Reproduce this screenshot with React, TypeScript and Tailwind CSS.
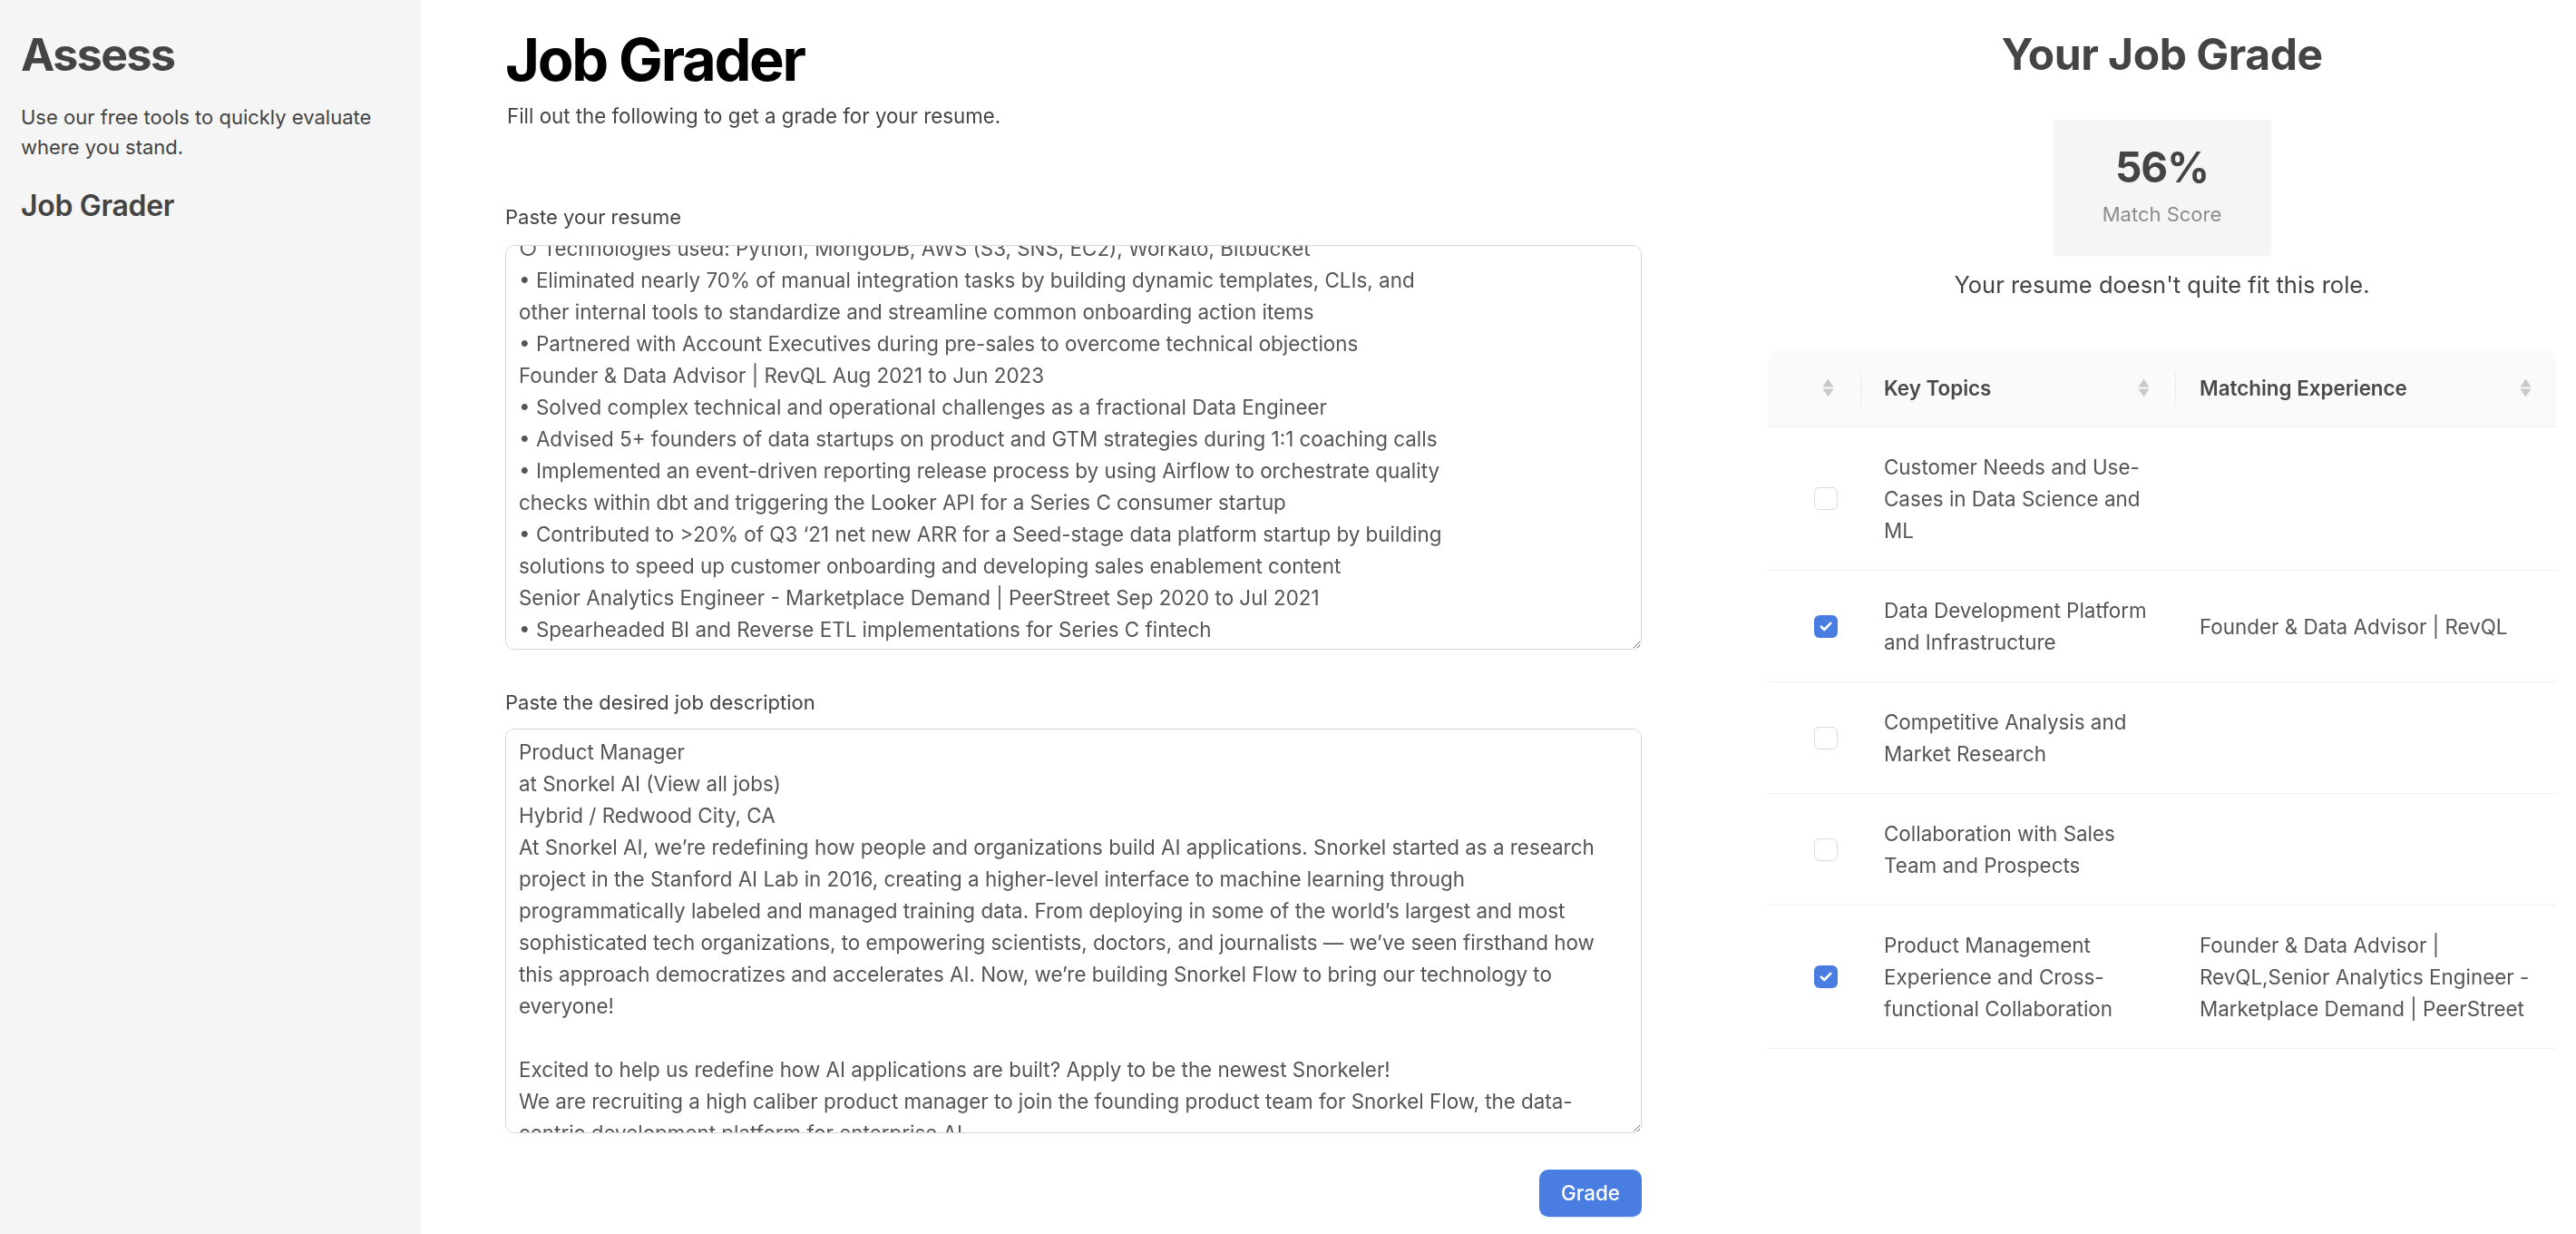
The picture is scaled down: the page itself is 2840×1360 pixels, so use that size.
import { useEffect, useRef } from 'react'

const resumeText = [
  'Solutions Engineer | Workato Jul 2023 to Present',
  '• Designed and shipped integration recipes for enterprise customer onboarding',
  '• Built internal automation to sync CRM, billing and support data across teams',
  '○ Technologies used: Python, MongoDB, AWS (S3, SNS, EC2), Workato, Bitbucket',
  '• Eliminated nearly 70% of manual integration tasks by building dynamic templates, CLIs, and',
  'other internal tools to standardize and streamline common onboarding action items',
  '• Partnered with Account Executives during pre-sales to overcome technical objections',
  'Founder & Data Advisor | RevQL Aug 2021 to Jun 2023',
  '• Solved complex technical and operational challenges as a fractional Data Engineer',
  '• Advised 5+ founders of data startups on product and GTM strategies during 1:1 coaching calls',
  '• Implemented an event-driven reporting release process by using Airflow to orchestrate quality',
  'checks within dbt and triggering the Looker API for a Series C consumer startup',
  '• Contributed to >20% of Q3 ‘21 net new ARR for a Seed-stage data platform startup by building',
  'solutions to speed up customer onboarding and developing sales enablement content',
  'Senior Analytics Engineer - Marketplace Demand | PeerStreet Sep 2020 to Jul 2021',
  '• Spearheaded BI and Reverse ETL implementations for Series C fintech',
  '• Modeled marketplace demand data in dbt and Snowflake for investor reporting',
  '• Partnered with Product to define KPIs and self-serve dashboards in Looker',
  'Education',
].join('\n')

const jobText = [
  'Product Manager',
  'at Snorkel AI (View all jobs)',
  'Hybrid / Redwood City, CA',
  'At Snorkel AI, we’re redefining how people and organizations build AI applications. Snorkel started as a research',
  'project in the Stanford AI Lab in 2016, creating a higher-level interface to machine learning through',
  'programmatically labeled and managed training data. From deploying in some of the world’s largest and most',
  'sophisticated tech organizations, to empowering scientists, doctors, and journalists — we’ve seen firsthand how',
  'this approach democratizes and accelerates AI. Now, we’re building Snorkel Flow to bring our technology to',
  'everyone!',
  '',
  'Excited to help us redefine how AI applications are built? Apply to be the newest Snorkeler!',
  'We are recruiting a high caliber product manager to join the founding product team for Snorkel Flow, the data-',
  'centric development platform for enterprise AI.',
].join('\n')

const rows = [
  { checked: false, topic: ['Customer Needs and Use-', 'Cases in Data Science and', 'ML'], match: [] as string[] },
  { checked: true, topic: ['Data Development Platform', 'and Infrastructure'], match: ['Founder & Data Advisor | RevQL'] },
  { checked: false, topic: ['Competitive Analysis and', 'Market Research'], match: [] },
  { checked: false, topic: ['Collaboration with Sales', 'Team and Prospects'], match: [] },
  {
    checked: true,
    topic: ['Product Management', 'Experience and Cross-', 'functional Collaboration'],
    match: ['Founder & Data Advisor |', 'RevQL,Senior Analytics Engineer -', 'Marketplace Demand | PeerStreet'],
  },
]

function SortIcon() {
  return (
    <svg width="13" height="21" viewBox="0 0 13 21" className="shrink-0">
      <path d="M6.5 0.5L12.5 9.5H0.5z" fill="#c9c9c9" />
      <path d="M0.5 11.5h12l-6 9z" fill="#c9c9c9" />
    </svg>
  )
}

function Checkbox({ on }: { on: boolean }) {
  if (!on) {
    return <span className="block h-[25px] w-[26px] rounded-[6px] border-[1.5px] border-[#d9d9d9] bg-white" />
  }
  return (
    <span className="flex h-[25px] w-[26px] items-center justify-center rounded-[6px] bg-[#4a7de2]">
      <svg width="14" height="11" viewBox="0 0 14 11">
        <path d="M1.8 5.6L5.2 9L12.2 1.8" stroke="white" strokeWidth="2.6" fill="none" strokeLinecap="round" strokeLinejoin="round" />
      </svg>
    </span>
  )
}

function Lines({ lines }: { lines: string[] }) {
  return (
    <>
      {lines.map((l, i) => (
        <div key={i} className="whitespace-nowrap">
          {l}
        </div>
      ))}
    </>
  )
}

export default function App() {
  const resumeRef = useRef<HTMLTextAreaElement>(null)

  useEffect(() => {
    if (resumeRef.current) resumeRef.current.scrollTop = 127
  }, [])

  const areaCls =
    'block h-[446px] w-full resize-y rounded-[10px] border border-[#d6d6d6] bg-white px-[14px] py-[7px] text-[22.4px] leading-[35px] text-[#555] outline-none [scrollbar-width:none]'

  return (
    <div className="flex min-h-screen bg-white text-[#444] [font-family:Inter,sans-serif]">
      {/* Sidebar */}
      <aside className="w-[464px] shrink-0 bg-[#f5f5f5] px-[23px] pt-[35px]">
        <h2 className="text-[50px] font-bold leading-[50px] tracking-[-0.03em] text-[#444]">Assess</h2>
        <p className="mt-[28px] text-[22px] leading-[33px] text-[#444]">
          Use our free tools to quickly evaluate
          <br />
          where you stand.
        </p>
        <h3 className="mt-[28px] text-[32px] font-semibold leading-[40px] tracking-[-0.01em] text-[#444]">Job Grader</h3>
      </aside>

      {/* Form */}
      <section className="ml-[93px] w-[1253px] shrink-0 pt-[33px]">
        <h1 className="text-[65px] font-bold leading-[65px] tracking-[-0.035em] text-black">Job Grader</h1>
        <p className="mt-[13px] pl-[2px] text-[22.3px] leading-[33px] text-[#444]">
          Fill out the following to get a grade for your resume.
        </p>

        <label className="mt-[79px] block text-[22px] leading-[33px] text-[#444]">Paste your resume</label>
        <textarea ref={resumeRef} className={`mt-[14px] ${areaCls}`} defaultValue={resumeText} />

        <label className="mt-[42px] block text-[22px] leading-[33px] text-[#444]">Paste the desired job description</label>
        <textarea className={`mt-[12px] ${areaCls}`} defaultValue={jobText} />

        <div className="mt-[40px] flex justify-end">
          <button className="h-[52px] w-[113px] rounded-[10px] bg-[#4a7de2] text-[22.4px] font-medium text-white shadow-[0_2px_0_rgba(5,145,255,0.1)]">
            Grade
          </button>
        </div>
      </section>

      {/* Result */}
      <section className="ml-[139px] w-[869px] shrink-0 pt-[36px]">
        <h2 className="text-center text-[48px] font-bold leading-[48px] tracking-[-0.01em] text-[#444]">Your Job Grade</h2>

        <div className="mx-auto mt-[48px] flex h-[150px] w-[240px] flex-col items-center bg-[#f5f5f5] pt-[29px]">
          <div className="text-[46px] font-bold leading-[46px] tracking-[-0.02em] text-[#444]">56%</div>
          <div className="mt-[13px] text-[22px] leading-[33px] text-[#8c8c8c]">Match Score</div>
        </div>

        <p className="mt-[12px] text-center text-[25.5px] leading-[39px] text-[#444]">
          Your resume doesn't quite fit this role.
        </p>

        <div className="mt-[52px] text-[22.4px] leading-[35px]">
          <div className="grid h-[86px] grid-cols-[102px_347px_420px] items-center rounded-t-[13px] border-b border-[#f0f0f0] bg-[#fafafa]">
            <div className="flex justify-end pr-[29px]">
              <SortIcon />
            </div>
            <div className="flex items-center">
              <span className="h-[36px] w-px bg-[#ececec]" />
              <span className="ml-[25px] flex-1 font-semibold text-[#4a4a4a]">Key Topics</span>
              <span className="mr-[28px]">
                <SortIcon />
              </span>
            </div>
            <div className="flex items-center">
              <span className="h-[36px] w-px bg-[#ececec]" />
              <span className="ml-[26px] flex-1 font-semibold text-[#4a4a4a]">Matching Experience</span>
              <span className="mr-[27px]">
                <SortIcon />
              </span>
            </div>
          </div>

          {rows.map((r, i) => (
            <div
              key={i}
              className="grid grid-cols-[102px_347px_420px] items-center border-b border-[#f0f0f0] py-[26px] text-[#555]"
            >
              <div className="flex justify-end pr-[25px]">
                <Checkbox on={r.checked} />
              </div>
              <div className="pl-[26px]">
                <Lines lines={r.topic} />
              </div>
              <div className="pl-[27px]">
                <Lines lines={r.match} />
              </div>
            </div>
          ))}
        </div>
      </section>
    </div>
  )
}
